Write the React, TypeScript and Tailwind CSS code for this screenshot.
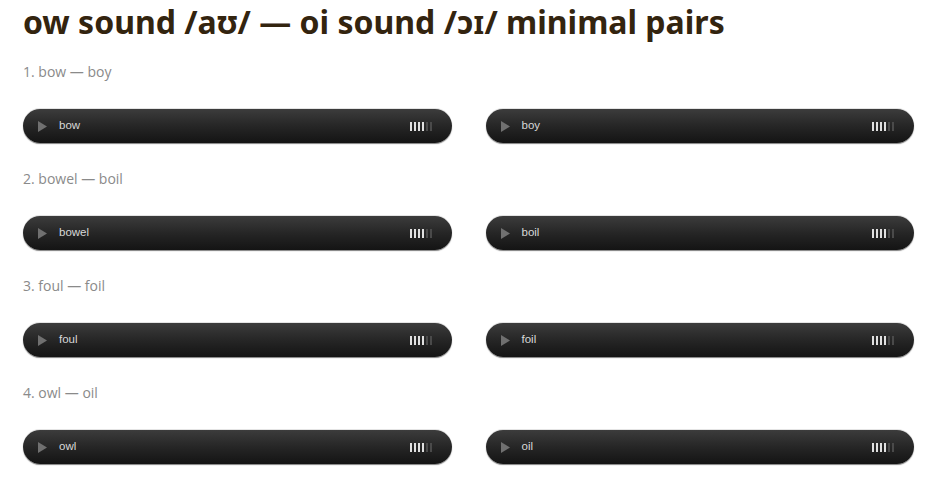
const pairs = [
  { label: '1. bow — boy', left: 'bow', right: 'boy' },
  { label: '2. bowel — boil', left: 'bowel', right: 'boil' },
  { label: '3. foul — foil', left: 'foul', right: 'foil' },
  { label: '4. owl — oil', left: 'owl', right: 'oil' },
];

function Player({ title }: { title: string }) {
  return (
    <div className="flex h-[34px] items-center rounded-full bg-gradient-to-b from-[#3c3c3c] via-[#262626] to-[#141414] pl-[15px] pr-[20px] shadow-[0_-1px_0_#e4e4e4,0_1px_1px_rgba(0,0,0,0.5)]">
      <svg width="9" height="11" viewBox="0 0 9 11" className="shrink-0">
        <path d="M0 0 L9 5.5 L0 11 Z" fill="#707070" />
      </svg>
      <span className="ml-[12px] text-[11.5px] text-[#d8d8d8] [font-family:'Liberation_Sans',Arial,sans-serif]">
        {title}
      </span>
      <div className="ml-auto flex items-center gap-[2px]">
        {[0, 1, 2, 3, 4, 5].map((i) => (
          <div
            key={i}
            className={i < 4 ? 'h-[9px] w-[2px] bg-[#e0e0e0]' : 'h-[9px] w-[2px] bg-[#4a4a4a]'}
          />
        ))}
      </div>
    </div>
  );
}

export default function App() {
  return (
    <div className="min-h-[478px] w-[939px] bg-white px-[23px] pt-[2px]">
      <h1 className="text-[32px] font-bold leading-[40px] text-[#33240f] [font-family:'Noto_Sans',sans-serif]">
        ow sound /aʊ/ — oi sound /ɔɪ/ minimal pairs
      </h1>
      <div className="mt-[20px] flex flex-col">
        {pairs.map((p) => (
          <div key={p.label} className="mb-[26px] flex flex-col">
            <p className="text-[14px] leading-[20px] text-[#8a8a8a] [font-family:'Open_Sans',sans-serif]">
              {p.label}
            </p>
            <div className="mt-[27px] grid grid-cols-2 gap-[34px] pr-[2px]">
              <Player title={p.left} />
              <Player title={p.right} />
            </div>
          </div>
        ))}
      </div>
    </div>
  );
}
